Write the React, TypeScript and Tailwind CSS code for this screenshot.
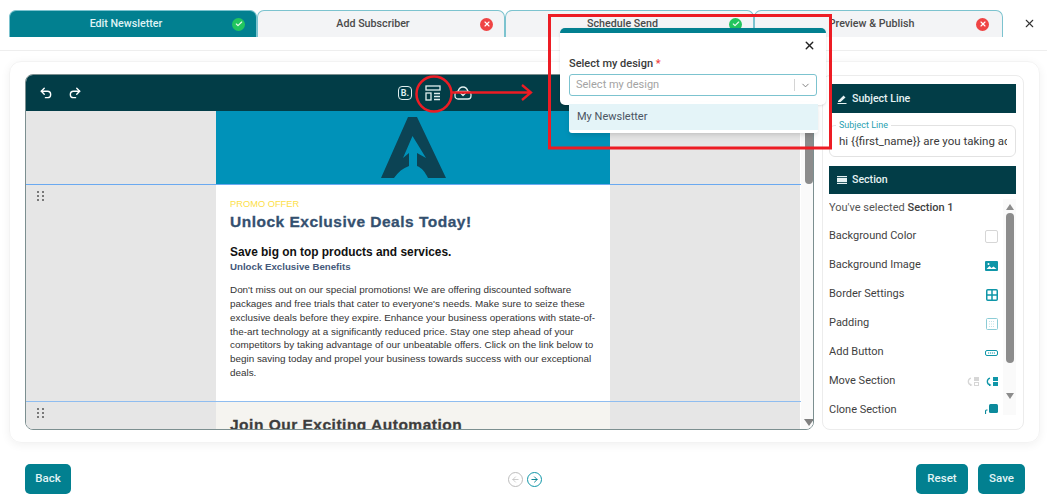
import { Check, ChevronDown, Redo2, Undo2, X, ArrowLeft, ArrowRight } from "lucide-react";

const ui = "font-['Roboto','Inter',sans-serif]";

function StatusDot({ ok }: { ok: boolean }) {
  return (
    <span className={`flex h-[13px] w-[13px] shrink-0 items-center justify-center rounded-full ${ok ? "bg-[#22c55e]" : "bg-[#ef4444]"}`}>
      {ok ? <Check size={8} strokeWidth={3.5} className="text-white/90" /> : <X size={8} strokeWidth={3.5} className="text-white" />}
    </span>
  );
}

const tabs = [
  { label: "Edit Newsletter", ok: true, active: true, width: "w-[248px]", pad: "pl-[10px] pr-[11px]" },
  { label: "Add Subscriber", ok: false, active: false, width: "w-[248px]", pad: "pl-[8px] pr-[11px]" },
  { label: "Schedule Send", ok: true, active: false, width: "w-[249px]", pad: "pl-[10px] pr-[11px]" },
  { label: "Preview & Publish", ok: false, active: false, width: "w-[249px]", pad: "pl-[12px] pr-[13px]" },
];

function Tabs() {
  return (
    <div className="flex h-[51px] items-start border-b border-[#eeeeee] pl-[9px] pt-[10px]">
      {tabs.map((t) => (
        <div
          key={t.label}
          className={`flex h-[27px] items-center rounded-t-[7px] border border-b-0 border-[#7cc3cf] text-[10.7px] font-medium ${t.width} ${t.pad} ${
            t.active ? "bg-[#028090] text-[#dff3f5]" : "bg-[#f3f4f6] text-[#4a4a4a]"
          }`}
        >
          <span className="flex-1 text-center">{t.label}</span>
          <StatusDot ok={t.ok} />
        </div>
      ))}
      <X size={13} strokeWidth={2} className="ml-[20px] mt-[7px] text-[#333333]" />
    </div>
  );
}

function Toolbar() {
  return (
    <div className="flex h-[36px] items-center bg-[#023d47] pl-[13px] pr-[341px] text-white">
      <Undo2 size={14} strokeWidth={2.4} />
      <Redo2 size={14} strokeWidth={2.4} className="ml-[15px]" />
      <div className="ml-auto flex items-center gap-[13px]">
        <span className="flex h-[14px] w-[14px] items-center justify-center rounded-[4px] border-[1.5px] border-[#dfeeee] text-[9px] font-bold leading-none text-[#dfeeee]">
          B.
        </span>
        <svg width="16" height="16" viewBox="0 0 16 16" fill="none" stroke="#dfeeee" strokeWidth="1.3">
          <rect x="1" y="1" width="14" height="4" />
          <rect x="1" y="8" width="5" height="7" />
          <path d="M9 8.5h6M9 11.5h6M9 14.5h6" />
        </svg>
        <svg width="18" height="14" viewBox="0 0 18 14" fill="none" stroke="#dfeeee" strokeWidth="1.3" strokeLinecap="round" strokeLinejoin="round">
          <path d="M4 5.5C5 2 7 1 9 1s4 1 5 4.5" />
          <rect x="1" y="5.5" width="16" height="7.5" rx="3" />
          <path d="M6.5 7l2.5 2.5L11.5 7" />
        </svg>
      </div>
    </div>
  );
}

function DragDots() {
  return (
    <div className="grid w-[7px] grid-cols-2 gap-x-[3px] gap-y-[2px] pl-0">
      {[0, 1, 2, 3, 4, 5].map((i) => (
        <span key={i} className="h-[2px] w-[2px] rounded-full bg-[#555555]" />
      ))}
    </div>
  );
}

function SideCell({ dots }: { dots?: boolean }) {
  return <div className="w-[190px] shrink-0 bg-[#e6e6e6] pl-[11px] pt-[6px]">{dots && <DragDots />}</div>;
}

function Logo() {
  return (
    <svg width="65" height="61" viewBox="0 0 65 61" fill="#0c4354">
      <path d="M27 0H36L65 61H47C44 55 41 51 36 49V36L45 41L31.5 19L22 41L28 36V49C22 51 17 55 13 61H0Z" />
    </svg>
  );
}

function Canvas() {
  return (
    <div className="flex min-w-0 flex-1 overflow-hidden">
      <div className="w-[775px] shrink-0 font-['Liberation_Sans',Arial,sans-serif]">
        <div className="flex h-[74px] border-b border-[#6aa9f0]">
          <SideCell />
          <div className="flex w-[394px] justify-center bg-[#0092b9] pt-[6px]">
            <Logo />
          </div>
          <SideCell />
        </div>
        <div className="flex h-[217px] border-b border-[#8fbdf0]">
          <SideCell dots />
          <div className="w-[394px] bg-white px-[14px] pt-[13px]">
            <p className="text-[9.3px] leading-[12px] text-[#fde047]">PROMO OFFER</p>
            <h2 className="mt-[2px] text-[15.5px] font-bold leading-[20px] tracking-[0.5px] text-[#34506f] [-webkit-text-stroke:0.3px_#34506f]">Unlock Exclusive Deals Today!</h2>
            <h3 className="mt-[12px] text-[11.9px] font-bold leading-[16px] text-[#111111]">Save big on top products and services.</h3>
            <h4 className="mt-[0px] text-[9.7px] font-bold leading-[14px] text-[#45597a]">Unlock Exclusive Benefits</h4>
            <p className="mt-[9px] text-[9.9px] leading-[13.85px] text-[#333333]">
              Don't miss out on our special promotions! We are offering discounted software packages and free trials that cater to everyone's needs. Make sure to seize these exclusive deals before they expire. Enhance your business operations with state-of-the-art technology at a significantly reduced price. Stay one step ahead of your competitors by taking advantage of our unbeatable offers. Click on the link below to begin saving today and propel your business towards success with our exceptional deals.
            </p>
          </div>
          <SideCell />
        </div>
        <div className="flex h-[60px]">
          <SideCell dots />
          <div className="w-[394px] bg-[#f5f4f0] px-[14px] pt-[13px]">
            <h2 className="whitespace-nowrap text-[15.5px] font-bold leading-[20px] tracking-[0.5px] text-[#3d3d3d] [-webkit-text-stroke:0.3px_#3d3d3d]">Join Our Exciting Automation</h2>
          </div>
          <SideCell />
        </div>
      </div>
      <div className="flex w-[13px] shrink-0 flex-col items-center bg-[#fafafa] pl-[3px]">
        <div className="h-[73px] w-[8px] rounded-full bg-[#8c8c8c]" />
        <span className="mt-auto mb-[3px] h-0 w-0 border-x-[5px] border-t-[7px] border-x-transparent border-t-[#808080]" />
      </div>
    </div>
  );
}

const teal = "#0f96a8";

const rows: { label: string; icon: React.ReactNode }[] = [
  { label: "Background Color", icon: <span className="block h-[13px] w-[13px] rounded-[2px] border border-[#d6d6d6] bg-white" /> },
  {
    label: "Background Image",
    icon: (
      <svg width="13" height="10" viewBox="0 0 13 10">
        <rect width="13" height="10" rx="1" fill={teal} />
        <path d="M1.5 8l3-3 2 2 2-1.5 3 2.5z" fill="#fff" />
        <circle cx="3.5" cy="3" r="1" fill="#fff" />
      </svg>
    ),
  },
  {
    label: "Border Settings",
    icon: (
      <svg width="12" height="12" viewBox="0 0 12 12" fill="none" stroke={teal} strokeWidth="1.5">
        <rect x="0.75" y="0.75" width="10.5" height="10.5" rx="1" />
        <path d="M6 1v10M1 6h10" />
      </svg>
    ),
  },
  {
    label: "Padding",
    icon: (
      <svg width="12" height="12" viewBox="0 0 12 12" fill="none" stroke="#8cccd6" strokeWidth="1">
        <rect x="0.5" y="0.5" width="11" height="11" rx="1" />
        <path d="M3 3.5h6M3 6h6M3 8.5h6" strokeDasharray="1 1" stroke="#c2e3e8" />
      </svg>
    ),
  },
  {
    label: "Add Button",
    icon: (
      <svg width="13" height="6" viewBox="0 0 13 6" fill="none" stroke={teal} strokeWidth="1">
        <rect x="0.5" y="0.5" width="12" height="5" rx="1.5" />
        <path d="M3 3h7" strokeDasharray="1.2 0.8" />
      </svg>
    ),
  },
  {
    label: "Move Section",
    icon: (
      <span className="flex items-center gap-[7px]">
        <svg width="12" height="9" viewBox="0 0 12 9" fill="#d6d6d6">
          <path d="M4 1.2A3.5 3.5 0 0 0 4 8" fill="none" stroke="#d6d6d6" strokeWidth="1.3" />
          <path d="M3 6.5v3L5.5 8z" />
          <rect x="7" y="0" width="5" height="4" />
          <rect x="7.5" y="5.5" width="4" height="3" fill="none" stroke="#d6d6d6" />
        </svg>
        <svg width="12" height="9" viewBox="0 0 12 9" fill={teal}>
          <path d="M4 1.2A3.5 3.5 0 0 0 4 8" fill="none" stroke={teal} strokeWidth="1.3" />
          <path d="M3 6.5v3L5.5 8z" />
          <rect x="7" y="0" width="5" height="4" />
          <rect x="7" y="5" width="5" height="4" />
        </svg>
      </span>
    ),
  },
  {
    label: "Clone Section",
    icon: (
      <svg width="13" height="10" viewBox="0 0 13 10" fill="#0c8a9c" className="mt-[-3px]">
        <rect x="4" y="0" width="9" height="9" rx="1.5" />
        <path d="M0 10V7A1.5 1.5 0 0 1 1.5 5.5H2.5V6.6H1.8A.7.7 0 0 0 1.1 7.3V10z" />
      </svg>
    ),
  },
];

function Sidebar() {
  return (
    <aside className="flex h-[355px] w-[202px] shrink-0 flex-col overflow-hidden rounded-[8px] border border-[#ececec] pl-[6px] pr-[7px] pt-[8px] text-[#3f3f3f]">
      <div className="flex h-[29px] shrink-0 items-center gap-[5px] bg-[#023d47] pl-[8px] text-[10.6px] font-medium text-[#e6f2f3]">
        <svg width="10" height="10" viewBox="0 0 10 10" fill="#e6f2f3">
          <path d="M1 7L6.5 1.5 8.5 3.5 3.5 8H1zM0.5 9h9v1h-9z" />
        </svg>
        Subject Line
      </div>
      <fieldset className="mt-[8px] h-[36px] min-w-0 shrink-0 rounded-[6px] border border-[#e2e2e2] pl-[6px] pr-[8px] pt-[2px]">
        <legend className="px-[3px] text-[9px] leading-[9px] text-[#2a9fb0]">Subject Line</legend>
        <div className="overflow-hidden whitespace-nowrap pl-[3px] text-[11.5px] leading-[18px] text-[#3a3a3a]">hi {"{{first_name}}"} are you taking ad</div>
      </fieldset>
      <div className="mt-[9px] flex h-[28px] shrink-0 items-center gap-[5px] bg-[#023d47] pl-[8px] text-[10.6px] font-medium text-[#e6f2f3]">
        <svg width="10" height="8" viewBox="0 0 10 8" fill="#e6f2f3">
          <rect width="10" height="1.2" />
          <rect y="2" width="10" height="4" />
          <rect y="6.8" width="10" height="1.2" />
        </svg>
        Section
      </div>
      <div className="flex h-[220px] shrink-0 pt-[5px]">
        <div className="min-w-0 flex-1 overflow-hidden pr-[5px] text-[11px]">
          <p className="h-[23px] pt-[1px] text-[#555555]">
            You've selected <b className="font-medium text-[#3f3f3f]">Section 1</b>
          </p>
          {rows.map((r) => (
            <div key={r.label} className="flex h-[29px] items-center justify-between">
              <span>{r.label}</span>
              {r.icon}
            </div>
          ))}
        </div>
        <div className="flex h-[216px] w-[13px] shrink-0 flex-col items-center bg-[#fafafa] pt-[5px]">
          <span className="h-0 w-0 border-x-[4px] border-b-[6px] border-x-transparent border-b-[#8c8c8c]" />
          <div className="mt-[3px] h-[150px] w-[8px] rounded-full bg-[#8c8c8c]" />
          <span className="mt-[30px] h-0 w-0 border-x-[4px] border-t-[6px] border-x-transparent border-t-[#8c8c8c]" />
        </div>
      </div>
    </aside>
  );
}

function Footer() {
  return (
    <div className="mt-[21px] flex items-center pl-[25px] pr-[22px] text-[11.5px] font-medium text-[#e3f4f6]">
      <button className="h-[30px] w-[46px] rounded-[5px] bg-[#028090]">Back</button>
      <div className="ml-[437px] flex items-center gap-[4px]">
        <span className="flex h-[15px] w-[15px] items-center justify-center rounded-full border border-[#bdbdbd] text-[#bdbdbd]">
          <ArrowLeft size={9} strokeWidth={2} />
        </span>
        <span className="flex h-[15px] w-[15px] items-center justify-center rounded-full border-[1.5px] border-[#0f96a8] text-[#028090]">
          <ArrowRight size={9} strokeWidth={2.5} />
        </span>
      </div>
      <button className="ml-auto h-[30px] w-[52px] rounded-[5px] bg-[#028090]">Reset</button>
      <button className="ml-[10px] h-[30px] w-[47px] rounded-[5px] bg-[#028090]">Save</button>
    </div>
  );
}

function DesignPopup() {
  return (
    <div className="absolute left-[560px] top-[28px] w-[266px]">
      <div className="h-[77px] rounded-[5px] border-t-[5px] border-[#028090] bg-white px-[9px] shadow-sm">
        <div className="flex h-[24px] items-center justify-end pr-[1px]">
          <X size={13} strokeWidth={2.5} className="text-[#222222]" />
        </div>
        <p className="text-[11px] font-medium leading-[14px] text-[#3a3a3a]">
          Select my design <span className="text-[#ef4444]">*</span>
        </p>
        <div className="mt-[3px] flex h-[22px] w-[248px] items-center rounded-[3px] border border-[#7cc3cf] bg-white pl-[6px] text-[11px] text-[#a3a3a3]">
          <span className="flex-1">Select my design</span>
          <span className="h-[12px] w-px bg-[#d4d4d4]" />
          <ChevronDown size={11} className="mx-[5px] text-[#777777]" />
        </div>
      </div>
      <div className="relative ml-[9px] mt-[-3px] h-[31px] w-[249px] rounded-[3px] bg-white py-[2px] shadow-md">
        <div className="flex h-[26px] items-center bg-[#e4f4f8] pl-[8px] text-[11px] text-[#4b5563]">My Newsletter</div>
      </div>
    </div>
  );
}

export default function App() {
  return (
    <div className={`relative h-[501px] w-[1047px] overflow-hidden bg-white ${ui}`}>
      <Tabs />
      <main className="ml-[9px] mt-[10px] flex h-[382px] w-[1031px] gap-[8px] rounded-[12px] border border-[#f3f3f3] px-[15px] pt-[13px] shadow-[0_2px_10px_rgba(0,0,0,0.06)]">
        <section className="mt-[-1px] flex h-[356px] w-[789px] shrink-0 flex-col overflow-hidden rounded-[8px] border border-[#7c8f90]">
          <Toolbar />
          <Canvas />
        </section>
        <Sidebar />
      </main>
      <Footer />
      <DesignPopup />

      {/* annotations drawn on top of the screenshot */}
      <svg className="pointer-events-none absolute left-0 top-0" width="1047" height="501" fill="none" stroke="#ed1c24">
        <circle cx="434" cy="94" r="17.5" strokeWidth="2.5" />
        <path d="M452 92.5H531M522 85l9 7.5-9 7.5" strokeWidth="2.3" />
        <rect x="549.5" y="15.5" width="281" height="132.5" strokeWidth="3" />
      </svg>
    </div>
  );
}
